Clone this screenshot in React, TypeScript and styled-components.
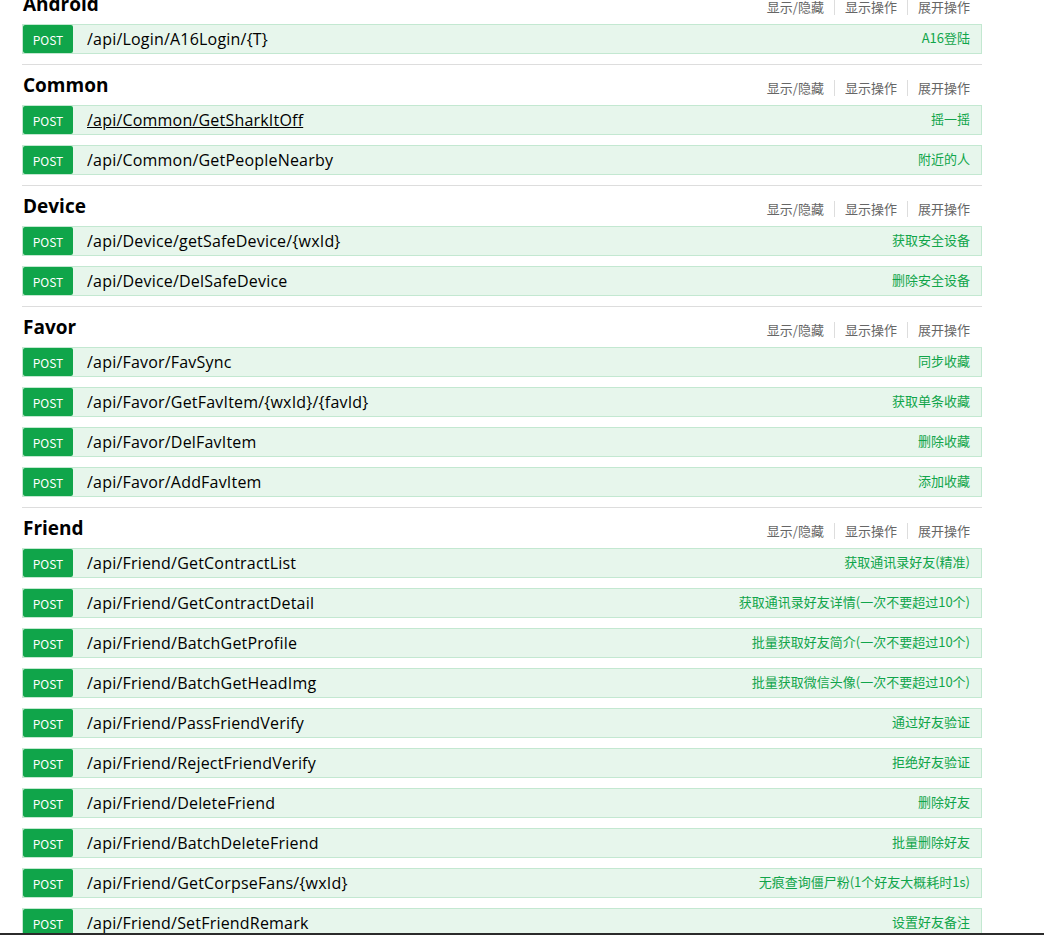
import styled, { createGlobalStyle } from "styled-components";

const GlobalStyle = createGlobalStyle`
  html, body {
    margin: 0;
    padding: 0;
    background: #fff;
  }
  body {
    font-family: "Open Sans", "Noto Sans CJK SC", sans-serif;
  }
`;

const Viewport = styled.div`
  height: 933px;
  overflow: hidden;
  border-bottom: 2px solid #2b2b2b;
`;

const Container = styled.div`
  width: 960px;
  margin: -17px 0 0 22px;
`;

const Section = styled.div`
  border-top: 1px solid #dddddd;
`;

const Header = styled.div`
  display: flex;
  align-items: center;
  justify-content: space-between;
  height: 40px;
`;

const Title = styled.h2`
  margin: 0;
  padding-left: 1px;
  font-size: 19px;
  font-weight: 700;
  color: #000;
  font-family: "Open Sans", "Noto Sans CJK SC", sans-serif;
  line-height: 22px;
`;

const Actions = styled.div`
  display: flex;
  align-items: center;
  padding-right: 12px;
  padding-top: 6px;
`;

const Action = styled.span`
  font-size: 13px;
  color: #666;
  font-family: "Noto Sans CJK SC", sans-serif;
  line-height: 16px;

  & + & {
    margin-left: 10px;
    padding-left: 10px;
    border-left: 1px solid #dddddd;
  }
`;

const Row = styled.div`
  display: flex;
  align-items: center;
  height: 30px;
  box-sizing: border-box;
  border: 1px solid #c3e8d1;
  background: #e7f6ec;
  margin-bottom: 10px;
`;

const Method = styled.span`
  display: flex;
  align-items: center;
  justify-content: center;
  width: 50px;
  height: 28px;
  background: #10a54a;
  color: #fff;
  border-radius: 2px;
  font-size: 12px;
  font-family: "Noto Sans CJK SC", sans-serif;
`;

const Path = styled.span<{ $hover?: boolean }>`
  margin-left: 14px;
  font-size: 16px;
  letter-spacing: 0.2px;
  color: #000;
  text-decoration: ${(p) => (p.$hover ? "underline" : "none")};
  flex: 1;
`;

const Summary = styled.span`
  padding-right: 11px;
  padding-bottom: 2px;
  font-size: 13px;
  line-height: 16px;
  color: #10a54a;
  font-family: "Noto Sans CJK SC", sans-serif;
`;

type Op = { path: string; summary: string; hover?: boolean };

const sections: { name: string; ops: Op[] }[] = [
  {
    name: "Android",
    ops: [{ path: "/api/Login/A16Login/{T}", summary: "A16登陆" }],
  },
  {
    name: "Common",
    ops: [
      { path: "/api/Common/GetSharkItOff", summary: "摇一摇", hover: true },
      { path: "/api/Common/GetPeopleNearby", summary: "附近的人" },
    ],
  },
  {
    name: "Device",
    ops: [
      { path: "/api/Device/getSafeDevice/{wxId}", summary: "获取安全设备" },
      { path: "/api/Device/DelSafeDevice", summary: "删除安全设备" },
    ],
  },
  {
    name: "Favor",
    ops: [
      { path: "/api/Favor/FavSync", summary: "同步收藏" },
      { path: "/api/Favor/GetFavItem/{wxId}/{favId}", summary: "获取单条收藏" },
      { path: "/api/Favor/DelFavItem", summary: "删除收藏" },
      { path: "/api/Favor/AddFavItem", summary: "添加收藏" },
    ],
  },
  {
    name: "Friend",
    ops: [
      { path: "/api/Friend/GetContractList", summary: "获取通讯录好友(精准)" },
      { path: "/api/Friend/GetContractDetail", summary: "获取通讯录好友详情(一次不要超过10个)" },
      { path: "/api/Friend/BatchGetProfile", summary: "批量获取好友简介(一次不要超过10个)" },
      { path: "/api/Friend/BatchGetHeadImg", summary: "批量获取微信头像(一次不要超过10个)" },
      { path: "/api/Friend/PassFriendVerify", summary: "通过好友验证" },
      { path: "/api/Friend/RejectFriendVerify", summary: "拒绝好友验证" },
      { path: "/api/Friend/DeleteFriend", summary: "删除好友" },
      { path: "/api/Friend/BatchDeleteFriend", summary: "批量删除好友" },
      { path: "/api/Friend/GetCorpseFans/{wxId}", summary: "无痕查询僵尸粉(1个好友大概耗时1s)" },
      { path: "/api/Friend/SetFriendRemark", summary: "设置好友备注" },
      { path: "/api/Friend/SearchContract", summary: "搜索联系人" },
    ],
  },
];

export default function App() {
  return (
    <>
      <GlobalStyle />
      <Viewport>
        <Container>
          {sections.map((s) => (
            <Section key={s.name}>
              <Header>
                <Title>{s.name}</Title>
                <Actions>
                  <Action>显示/隐藏</Action>
                  <Action>显示操作</Action>
                  <Action>展开操作</Action>
                </Actions>
              </Header>
              {s.ops.map((op) => (
                <Row key={op.path}>
                  <Method>POST</Method>
                  <Path $hover={op.hover}>{op.path}</Path>
                  <Summary>{op.summary}</Summary>
                </Row>
              ))}
            </Section>
          ))}
        </Container>
      </Viewport>
    </>
  );
}
